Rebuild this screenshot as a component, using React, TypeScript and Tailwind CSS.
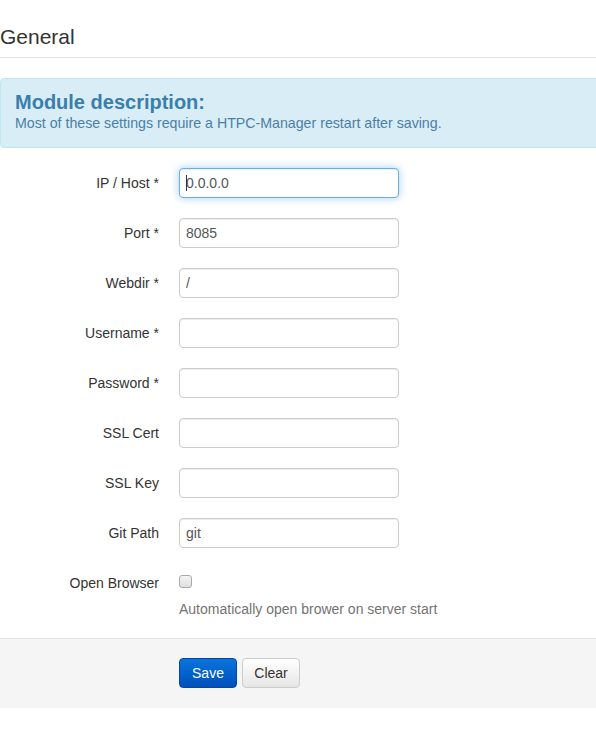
import React from "react";

const fields: { label: string; value: string; focused?: boolean }[] = [
  { label: "IP / Host *", value: "0.0.0.0", focused: true },
  { label: "Port *", value: "8085" },
  { label: "Webdir *", value: "/" },
  { label: "Username *", value: "" },
  { label: "Password *", value: "" },
  { label: "SSL Cert", value: "" },
  { label: "SSL Key", value: "" },
  { label: "Git Path", value: "git" },
];

function TextField({ value, focused }: { value: string; focused?: boolean }) {
  return (
    <div className="relative w-[220px]">
      <input
        readOnly
        value={value}
        className={
          focused
            ? "block h-[30px] w-[220px] rounded-[4px] border border-[#66afe9] bg-white pl-[6px] text-[14px] text-[#555] outline-none shadow-[inset_0_1px_1px_rgba(0,0,0,0.075),0_0_8px_rgba(102,175,233,0.6)]"
            : "block h-[30px] w-[220px] rounded-[4px] border border-[#ccc] bg-white pl-[6px] text-[14px] text-[#555] outline-none shadow-[inset_0_1px_1px_rgba(0,0,0,0.075)]"
        }
        style={{ fontFamily: "inherit" }}
      />
      {focused && <span className="absolute left-[7px] top-[7px] h-[16px] w-px bg-[#333]" />}
    </div>
  );
}

export default function App() {
  return (
    <div
      className="w-[596px] h-[731px] overflow-hidden bg-white text-[14px] text-[#333]"
      style={{ fontFamily: '"Liberation Sans", Arial, sans-serif' }}
    >
      <div className="border-b border-[#e5e5e5] pt-[22px] pb-[5px] text-[21px] leading-[30px] text-[#333]">
        General
      </div>

      <div className="mt-[20px] mr-[-10px] rounded-[4px] border border-[#bce8f1] bg-[#d9edf7] pl-[14px] pt-[12px] pb-[15px] text-[#31708f]">
        <div className="text-[20px] font-bold leading-[22px] text-[#3a7eaa]">Module description:</div>
        <div className="mt-px text-[14.2px] leading-[18px] text-[#4a7fa6]">
          Most of these settings require a HTPC-Manager restart after saving.
        </div>
      </div>

      <div className="mt-[20px] flex flex-col gap-[20px]">
        {fields.map((f) => (
          <div key={f.label} className="flex items-center">
            <div className="w-[159px] text-right leading-[20px]">{f.label}</div>
            <div className="ml-[20px]">
              <TextField value={f.value} focused={f.focused} />
            </div>
          </div>
        ))}

        <div className="flex items-start">
          <div className="w-[159px] pt-[5px] text-right leading-[20px]">Open Browser</div>
          <div className="ml-[20px] flex flex-col">
            <div className="pt-[7px]">
              <input
                type="checkbox"
                readOnly
                className="m-0 block h-[13px] w-[13px] appearance-none rounded-[3px] border border-[#a9a9a9] bg-gradient-to-b from-[#f4f4f4] to-[#dedede]"
              />
            </div>
            <div className="mt-[11px] leading-[20px] text-[#737373]">
              Automatically open brower on server start
            </div>
          </div>
        </div>
      </div>

      <div className="mt-[19px] border-t border-[#e5e5e5] bg-[#f5f5f5] pt-[19px] pb-[20px] pl-[179px]">
        <div className="flex gap-[5px]">
          <button className="h-[30px] w-[58px] rounded-[4px] border border-[#0049a8] bg-gradient-to-b from-[#0b74dc] to-[#0050bb] text-[14px] text-white">
            Save
          </button>
          <button className="h-[30px] w-[58px] rounded-[4px] border border-[#ccc] bg-gradient-to-b from-white to-[#e6e6e6] text-[14px] text-[#333]">
            Clear
          </button>
        </div>
      </div>
    </div>
  );
}
